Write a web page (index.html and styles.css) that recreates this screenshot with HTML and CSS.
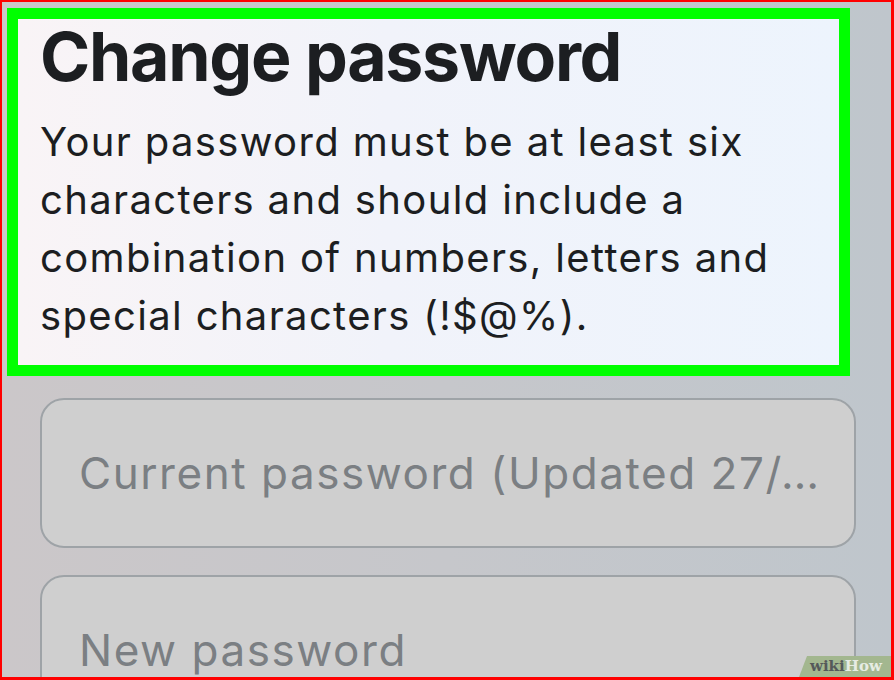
FILE: index.html
```html
<!DOCTYPE html>
<html lang="en">
<head>
<meta charset="utf-8">
<title>Change password</title>
<link rel="stylesheet" href="styles.css">
</head>
<body>
<div class="frame">
  <section class="highlight">
    <h1 class="title">Change password</h1>
    <p class="desc">Your password must be at least six characters and should include a combination of numbers, letters and special characters (!$@%).</p>
  </section>
  <div class="fields">
    <div class="field"><span class="placeholder">Current password (Updated 27/…</span></div>
    <div class="field"><span class="placeholder">New password</span></div>
  </div>
  <div class="watermark"><span class="wm-wiki">wiki</span><span class="wm-how">How</span></div>
</div>
</body>
</html>
```
FILE: styles.css
```css
* { box-sizing: border-box; }
html, body { margin: 0; padding: 0; }
body {
  width: 894px;
  height: 680px;
  overflow: hidden;
  font-family: "Inter", "Noto Sans", sans-serif;
}
.frame {
  position: relative;
  width: 894px;
  height: 680px;
  overflow: hidden;
  border-style: solid;
  border-color: #ff0000;
  border-width: 2px 3px 3px 2px;
  background: linear-gradient(90deg, #cbc7c9 0%, #c6c7cb 50%, #bfc6cc 100%);
  display: flex;
  flex-direction: column;
}
.highlight {
  margin: 6px 0 0 5px;
  width: 843px;
  height: 368px;
  flex: none;
  border: 11px solid #00ff00;
  background: linear-gradient(90deg, #f9f4f6 0%, #f1f3fa 45%, #edf4fd 100%);
  padding: 3px 0 0 22px;
}
.title {
  margin: 0;
  font-size: 68px;
  line-height: 69px;
  font-weight: 700;
  color: #1c1e21;
  letter-spacing: -1.3px;
}
.desc {
  margin: 22px 0 0 0;
  font-size: 40px;
  line-height: 58px;
  font-weight: 400;
  color: #1c1e21;
  letter-spacing: 1.35px;
  width: 790px;
}
.fields {
  margin: 22px 0 0 38px;
  width: 816px;
  display: flex;
  flex-direction: column;
  gap: 27px;
  flex: none;
}
.field {
  height: 150px;
  border: 2px solid #9ea3a7;
  border-radius: 24px;
  background: #cfcfcf;
  display: flex;
  align-items: center;
  padding-left: 37px;
  flex: none;
}
.placeholder {
  font-size: 44px;
  color: #7b7f83;
  letter-spacing: 1.55px;
  white-space: nowrap;
}
.watermark {
  position: absolute;
  right: 0;
  bottom: 0;
  width: 92px;
  height: 21px;
  background: #a3b78f;
  clip-path: polygon(8px 0, 100% 0, 100% 100%, 0 100%);
  font-family: "DejaVu Serif", "Liberation Serif", serif;
  font-weight: 700;
  font-size: 15px;
  line-height: 21px;
  padding-left: 11px;
  white-space: nowrap;
}
.wm-wiki { color: #55595a; }
.wm-how { color: #e6ece4; }
```
